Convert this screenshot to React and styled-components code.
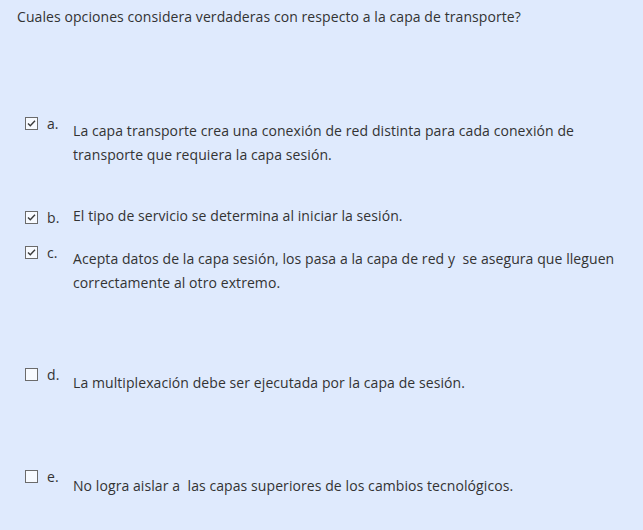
import React from "react";
import styled, { createGlobalStyle } from "styled-components";

const Global = createGlobalStyle`
  html, body {
    margin: 0;
    padding: 0;
    background: #dfeafd;
  }
  body {
    font-family: "Open Sans", "Noto Sans", sans-serif;
    font-size: 14px;
    letter-spacing: 0.08px;
    color: #333;
  }
`;

const Page = styled.div`
  width: 643px;
  height: 530px;
  background: #dfeafd;
  box-sizing: border-box;
  padding: 7px 0 0 17px;
`;

const Question = styled.div`
  line-height: 20px;
`;

const Answers = styled.div`
  display: flex;
  flex-direction: column;
  padding-left: 8px;
`;

const Row = styled.div`
  display: flex;
  align-items: flex-start;
  margin-top: ${(p) => p.$top}px;
`;

const Box = styled.svg`
  flex: none;
  width: 13px;
  height: 13px;
  display: block;
`;

const Letter = styled.span`
  flex: none;
  width: 35px;
  padding-left: 9px;
  box-sizing: border-box;
  line-height: 13px;
`;

const Text = styled.div`
  width: 560px;
  line-height: 24px;
  margin-top: ${(p) => p.$shift}px;
`;

const Check = ({ on }) => (
  <Box viewBox="0 0 13 13">
    <rect x="0.5" y="0.5" width="12" height="12" fill="#f7faff" stroke="#6b6b6b" />
    {on && (
      <path d="M3 6.5 L5.3 8.8 L10 3.8" fill="none" stroke="#3a3a3a" strokeWidth="1.4" />
    )}
  </Box>
);

const options = [
  {
    l: "a.",
    on: true,
    top: 90,
    shift: 2,
    t: "La capa transporte crea una conexión de red distinta para cada conexión de transporte que requiera la capa sesión.",
  },
  { l: "b.", on: true, top: 44, shift: -7, t: "El tipo de servicio se determina al iniciar la sesión." },
  {
    l: "c.",
    on: true,
    top: 18,
    shift: 1,
    t: "Acepta datos de la capa sesión, los pasa a la capa de red y\u00a0 se asegura que lleguen correctamente al otro extremo.",
  },
  { l: "d.", on: false, top: 73, shift: 3, t: "La multiplexación debe ser ejecutada por la capa de sesión." },
  { l: "e.", on: false, top: 75, shift: 4, t: "No logra aislar a\u00a0 las capas superiores de los cambios tecnológicos." },
];

export default function App() {
  return (
    <Page>
      <Global />
      <Question>Cuales opciones considera verdaderas con respecto a la capa de transporte?</Question>
      <Answers>
        {options.map((o) => (
          <Row key={o.l} $top={o.top}>
            <Check on={o.on} />
            <Letter>{o.l}</Letter>
            <Text $shift={o.shift}>{o.t}</Text>
          </Row>
        ))}
      </Answers>
    </Page>
  );
}
